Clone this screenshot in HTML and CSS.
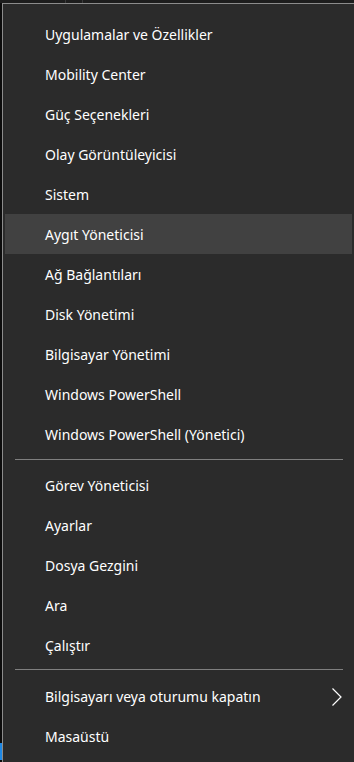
FILE: index.html
```html
<!DOCTYPE html>
<html lang="tr">
<head>
  <meta charset="UTF-8" />
  <meta name="viewport" content="width=device-width, initial-scale=1.0"/>
  <title>Win+X Menu</title>
  <link rel="stylesheet" href="styles.css">
</head>
<body>
  <!-- üstteki ince pencere şeridi -->
  <div class="topstrip">
    <span class="mark mark-a"></span>
    <span class="mark mark-b"></span>
  </div>

  <div class="screen">
    <!-- soldaki görev çubuğu kenarı -->
    <div class="edge">
      <span class="edge-blue"></span>
    </div>

    <!-- menü -->
    <div class="menu">
      <div class="item">Uygulamalar ve Özellikler</div>
      <div class="item">Mobility Center</div>
      <div class="item">Güç Seçenekleri</div>
      <div class="item">Olay Görüntüleyicisi</div>
      <div class="item">Sistem</div>
      <div class="item active">Aygıt Yöneticisi</div>
      <div class="item">Ağ Bağlantıları</div>
      <div class="item">Disk Yönetimi</div>
      <div class="item">Bilgisayar Yönetimi</div>
      <div class="item">Windows PowerShell</div>
      <div class="item">Windows PowerShell (Yönetici)</div>

      <div class="sep sep-first"></div>

      <div class="item">Görev Yöneticisi</div>
      <div class="item">Ayarlar</div>
      <div class="item">Dosya Gezgini</div>
      <div class="item">Ara</div>
      <div class="item">Çalıştır</div>

      <div class="sep"></div>

      <div class="item has-sub">
        <span>Bilgisayarı veya oturumu kapatın</span>
        <svg class="chevron" width="10" height="18" viewBox="0 0 10 18">
          <path d="M0.5 0.5 L9 9 L0.5 17.5" fill="none" stroke="#fff" stroke-width="1.2"/>
        </svg>
      </div>
      <div class="item">Masaüstü</div>
    </div>
  </div>
</body>
</html>
```

FILE: styles.css
```css
/* sayfa */
body {
  margin: 0;
  background-color: #1d1d1d;
  font-family: "Noto Sans", "Open Sans", sans-serif;
  color: #fff;
  height: 762px;
  overflow: hidden;
}

/* üst şerit */
.topstrip {
  height: 3px;
  display: flex;
}

.mark {
  width: 1px;
  height: 3px;
  background-color: #3a3a3a;
}

.mark-a {
  margin-left: 65px;
}

.mark-b {
  margin-left: 16px;
}

/* ekran: sol kenar + menü */
.screen {
  display: flex;
  height: 759px;
}

.edge {
  width: 2px;
  background-color: #0c0c0c;
  display: flex;
  flex-direction: column;
  justify-content: flex-end;
}

.edge-blue {
  height: 17px;
  margin-bottom: 2px;
  background-color: #1e88e5;
}

/* menü kutusu */
.menu {
  flex: 1;
  background-color: #2b2b2b;
  border-top: 1px solid #8c8c8c;
  border-left: 1px solid #8c8c8c;
  padding: 10px 2px 0 2px;
}

/* menü öğeleri */
.item {
  height: 40px;
  display: flex;
  align-items: center;
  padding-left: 40px;
  padding-right: 10px;
  font-size: 14px;
  white-space: nowrap;
}

.item.active {
  background-color: #414141;
}

.has-sub {
  justify-content: space-between;
}

.chevron {
  margin-top: 1px;
}

/* ayraç çizgisi */
.sep {
  height: 1px;
  background-color: #7f7f7f;
  margin: 4px 9px 6px 10px;
}

.sep-first {
  margin-top: 5px;
  margin-bottom: 5px;
}
```
